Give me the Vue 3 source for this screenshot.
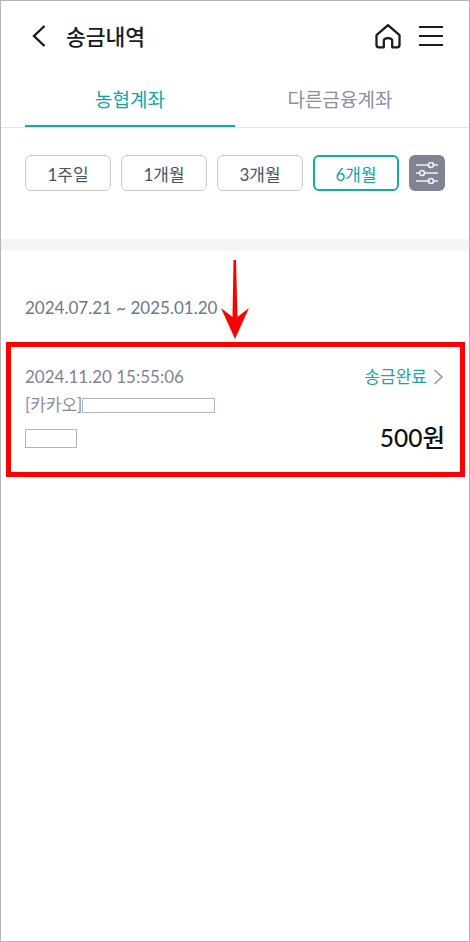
<script setup>
const periods = [
  { label: '1주일', active: false },
  { label: '1개월', active: false },
  { label: '3개월', active: false },
  { label: '6개월', active: true }
]
</script>

<template>
  <div class="screen">
    <header class="top">
      <svg class="back" width="16" height="24" viewBox="0 0 16 24">
        <path d="M13.5 2 L3 12 L13.5 22" fill="none" stroke="#1b1b1f" stroke-width="2.4" />
      </svg>
      <h1>송금내역</h1>
      <svg class="home" width="28" height="26" viewBox="0 0 28 26">
        <path d="M14 2.2 L25.5 12.2 V22 Q25.5 24.3 23.2 24.3 H18.2 V18 Q18.2 15.2 14 15.2 Q9.8 15.2 9.8 18 V24.3 H4.8 Q2.5 24.3 2.5 22 V12.2 Z" fill="none" stroke="#1b1b1f" stroke-width="2.3" stroke-linejoin="round" />
      </svg>
      <div class="menu"><i></i><i></i><i></i></div>
    </header>

    <nav class="tabs">
      <div class="tab on">농협계좌</div>
      <div class="tab">다른금융계좌</div>
    </nav>

    <div class="periods">
      <button v-for="p in periods" :key="p.label" :class="{ active: p.active }">{{ p.label }}</button>
      <div class="filter">
        <svg width="24" height="22" viewBox="0 0 24 22">
          <g stroke="#f2f3f5" stroke-width="1.7" fill="#7f8392">
            <path d="M1 3 H23 M1 11 H23 M1 19 H23" />
            <circle cx="16" cy="3" r="2.5" />
            <circle cx="7" cy="11" r="2.5" />
            <circle cx="16" cy="19" r="2.5" />
          </g>
        </svg>
      </div>
    </div>

    <div class="band"></div>

    <p class="range">2024.07.21 ~ 2025.01.20</p>

    <div class="item">
      <div class="row">
        <span class="when">2024.11.20 15:55:06</span>
        <span class="status">송금완료
          <svg width="12" height="16" viewBox="0 0 12 16">
            <path d="M1.5 1 L9 8 L1.5 15" fill="none" stroke="#8a8f9c" stroke-width="1.4" />
          </svg>
        </span>
      </div>
      <div class="memo">[카카오]<span class="mask wide"></span></div>
      <div class="row last">
        <span class="mask small"></span>
        <strong>500원</strong>
      </div>
    </div>

    <!-- annotation drawn over the capture -->
    <div class="redbox"></div>
    <svg class="arrow" width="30" height="82" viewBox="0 0 30 82">
      <path d="M13.5 0 H16 L17.5 57 L29 48 L15 79 L1 48 L12.5 57 Z" fill="#fe0000" />
    </svg>
  </div>
</template>

<style scoped>
.screen {
  position: relative;
  box-sizing: border-box;
  width: 470px;
  height: 942px;
  border: 1px solid #b4b4b4;
  background: #fff;
  font-family: Lato, "Noto Sans CJK KR", sans-serif;
  overflow: hidden;
}
.top {
  display: flex;
  align-items: center;
  height: 70px;
  padding: 0 26px 0 24px;
}
.back {
  margin-left: 6px;
}
h1 {
  margin: 0 0 2px 19px;
  flex: 1;
  font-size: 21.5px;
  font-weight: 500;
  color: #1b1b1f;
}
.home {
  margin-right: 17px;
}
.menu {
  display: flex;
  flex-direction: column;
  gap: 7px;
}
.menu i {
  display: block;
  width: 24px;
  height: 2px;
  background: #1b1b1f;
}
.tabs {
  display: flex;
  height: 56px;
  padding: 0 24px;
  border-bottom: 1px solid #e6e6e6;
}
.tab {
  flex: 1;
  height: 53px;
  padding-top: 1px;
  line-height: 55px;
  text-align: center;
  font-size: 19px;
  color: #8a8f9f;
}
.tab.on {
  color: #0fa5aa;
  border-bottom: 2px solid #0badb0;
}
.periods {
  display: flex;
  gap: 10px;
  padding: 27px 24px 0;
  height: 84px;
}
.periods button {
  box-sizing: border-box;
  width: 86px;
  height: 36px;
  padding: 0;
  background: #fff;
  border: 1px solid #c9c9c9;
  border-radius: 6px;
  font-family: inherit;
  font-size: 17px;
  color: #4a5266;
}
.periods button.active {
  border: 2px solid #0badb0;
  color: #0fa5aa;
}
.filter {
  display: flex;
  align-items: center;
  justify-content: center;
  width: 36px;
  height: 36px;
  background: #7f8392;
  border-radius: 6px;
}
.band {
  height: 12px;
  background: #f5f5f5;
}
.range {
  margin: 47px 0 0 24px;
  font-size: 17px;
  line-height: 20px;
  color: #6a7890;
}
.item {
  margin: 0 24px;
  padding-top: 49px;
  height: 110px;
  border-bottom: 1px solid #e6e6e6;
}
.row {
  display: flex;
  justify-content: space-between;
  align-items: center;
}
.when {
  font-size: 17px;
  line-height: 20px;
  color: #7d8494;
}
.status {
  display: flex;
  align-items: center;
  gap: 6px;
  font-size: 17px;
  line-height: 20px;
  color: #1fa5a8;
}
.memo {
  display: flex;
  align-items: center;
  height: 20px;
  margin-top: 8px;
  font-size: 17px;
  line-height: 20px;
  color: #8a8f9f;
}
.mask {
  display: block;
  box-sizing: border-box;
  background: #fff;
  border: 1px solid #b4b4bc;
}
.mask.wide {
  width: 133px;
  height: 15px;
}
.mask.small {
  width: 52px;
  height: 19px;
}
.last {
  margin-top: 8px;
}
strong {
  font-size: 24.5px;
  line-height: 30px;
  font-weight: 500;
  color: #111;
}
.redbox {
  position: absolute;
  left: 5px;
  top: 341px;
  width: 459px;
  height: 135px;
  box-sizing: border-box;
  border: 5px solid #fe0000;
}
.arrow {
  position: absolute;
  left: 219px;
  top: 259px;
}
</style>
